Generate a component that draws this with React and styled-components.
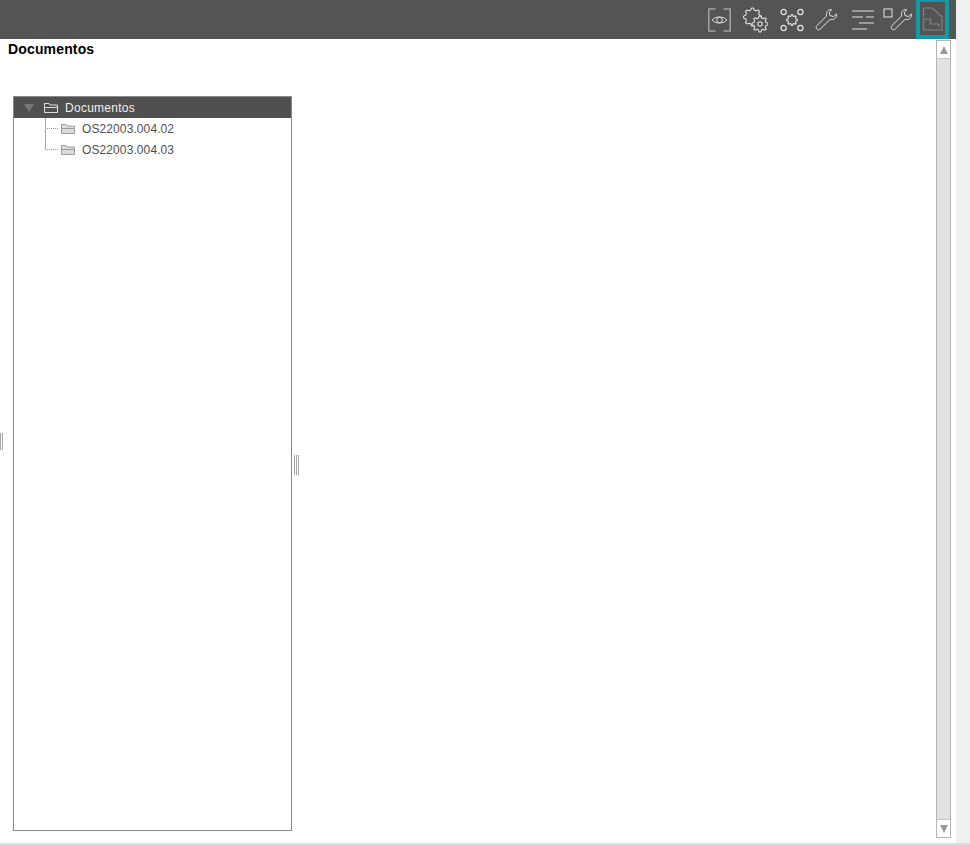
import React from 'react';
import styled, { createGlobalStyle } from 'styled-components';

const Global = createGlobalStyle`
  html, body { margin: 0; padding: 0; background: #fff; height: 100%; overflow: hidden; }
  #root { height: 100%; }
  * { box-sizing: border-box; }
`;

const Page = styled.div`
  width: 970px;
  height: 845px;
  display: flex;
  flex-direction: column;
  font-family: "Liberation Sans", Arial, sans-serif;
  background: #f0f0f0;
`;
const Frame = styled.div`
  flex: 1;
  min-height: 0;
  display: flex;
  flex-direction: column;
  width: 956px;
  background: #fff;
`;
const FootLine = styled.div`
  height: 2px;
  background: #d5dfe4;
`;
const Toolbar = styled.div`
  height: 39px;
  flex: none;
  background: #545454;
  display: flex;
  justify-content: flex-end;
  align-items: center;
  padding-right: 7px;
`;
const ToolButton = styled.button`
  flex: none;
  width: ${p => p.$w}px;
  height: 39px;
  margin-left: ${p => p.$ml || 0}px;
  padding: 0;
  background: transparent;
  border: ${p => (p.$active ? '4px solid #0e9aa7' : 'none')};
  border-top-width: ${p => (p.$active ? '2px' : '0')};
  display: flex;
  align-items: center;
  justify-content: center;
  svg { display: block; flex: none; }
`;
const Body = styled.div`
  flex: 1;
  min-height: 0;
  display: flex;
  position: relative;
`;
const Content = styled.div`
  flex: 1;
  min-width: 0;
  display: flex;
  flex-direction: column;
  padding: 2px 0 12px 8px;
`;
const Title = styled.h1`
  margin: 0;
  height: 55px;
  font-size: 14px;
  line-height: 16px;
  font-weight: 700;
  letter-spacing: 0.15px;
  color: #000;
`;
const TreePanel = styled.div`
  flex: 1;
  width: 279px;
  margin-left: 5px;
  border: 1px solid #8a8a8a;
  background: #fff;
`;
const TreeHead = styled.div`
  height: 21px;
  background: #505050;
  color: #efefef;
  display: flex;
  align-items: center;
  font-size: 12px;
  letter-spacing: 0.27px;
  padding-left: 10px;
`;
const Arrow = styled.span`
  width: 0;
  height: 0;
  border-left: 5px solid transparent;
  border-right: 5px solid transparent;
  border-top: 8px solid #767676;
  margin-right: 10px;
  margin-top: 1px;
`;
const HeadLabel = styled.span`
  margin-left: 6px;
`;
const TreeList = styled.ul`
  list-style: none;
  margin: 0;
  padding: 0 0 0 31px;
`;
const TreeRow = styled.li`
  position: relative;
  height: 21px;
  display: flex;
  align-items: center;
  font-size: 12px;
  letter-spacing: 0.1px;
  color: #505050;
  padding-left: 16px;
  &::before {
    content: "";
    position: absolute;
    left: 0;
    top: 0;
    height: ${p => (p.$last ? '11px' : '21px')};
    border-left: 1px solid #a8a8a8;
  }
  &::after {
    content: "";
    position: absolute;
    left: 2px;
    top: 10px;
    width: 11px;
    border-top: 1px dotted #9a9a9a;
  }
`;
const RowLabel = styled.span`
  margin-left: 6px;
`;
const Scrollbar = styled.div`
  flex: none;
  width: 15px;
  margin: 1px 5px 5px 0;
  display: flex;
  flex-direction: column;
  border: 1px solid #b4b4b4;
  background: #fff;
`;
const ScrollBtn = styled.div`
  flex: none;
  height: 17px;
  display: flex;
  align-items: center;
  justify-content: center;
  &::before {
    content: "";
    border-left: 4px solid transparent;
    border-right: 4px solid transparent;
    ${p => (p.$up ? 'border-bottom' : 'border-top')}: 8px solid #999;
  }
`;
const Thumb = styled.div`
  flex: 1;
  background: #e2e2e2;
  border-top: 1px solid #c4c4c4;
  border-bottom: 1px solid #c4c4c4;
`;
const Grip = styled.div`
  position: absolute;
  left: ${p => p.$x}px;
  top: ${p => p.$y}px;
  width: ${p => p.$w}px;
  height: ${p => p.$h}px;
  background: repeating-linear-gradient(90deg, #a6a6a6 0 1px, #fff 1px 2px);
`;

const Eye = () => (
  <svg width="23" height="24" viewBox="0 0 23 24" fill="none" stroke="#dcdcdc" strokeWidth="1">
    <path d="M7.5 1H0.8V23H7.5M15.5 1H22.2V23H15.5" stroke="#a4a4a4" strokeWidth="1.5" />
    <path d="M4 12C7 8 16 8 19 12C16 16 7 16 4 12Z" />
    <circle cx="11.5" cy="12" r="2.8" />
  </svg>
);

const cog = (cx, cy, ro, ri, teeth) => {
  let d = '';
  for (let i = 0; i < teeth * 4; i++) {
    const r = i % 4 < 2 ? ro : ri;
    const a = ((i - 0.5) / (teeth * 4)) * Math.PI * 2;
    d += `${i ? 'L' : 'M'}${(cx + r * Math.cos(a)).toFixed(2)} ${(cy + r * Math.sin(a)).toFixed(2)}`;
  }
  return d + 'Z';
};

const Gears = () => (
  <svg width="25" height="26" viewBox="0 0 25 26" fill="none" stroke="#e2e2e2" strokeWidth="1.1" strokeLinejoin="round">
    <path d={cog(9.5, 10, 9, 7, 8)} />
    <path d={cog(17, 17, 8, 6, 8)} fill="#545454" />
    <circle cx="17" cy="17" r="2.2" />
  </svg>
);

const Nodes = () => (
  <svg width="24" height="24" viewBox="0 0 24 24" fill="none" stroke="#e6e6e6" strokeWidth="1.2">
    <path d={cog(12, 12, 5.4, 4, 8)} strokeWidth="1.1" strokeLinejoin="round" />
    <circle cx="3.6" cy="4" r="2.6" />
    <circle cx="20.4" cy="4" r="2.6" />
    <circle cx="3.6" cy="20" r="2.6" />
    <circle cx="20.4" cy="20" r="2.6" />
  </svg>
);

const wrenchPath = 'M16.5 1.5C13.5 1.2 11.2 3.6 11.5 6.8C11.6 7.6 11.4 8.2 10.8 8.8L1.9 17.6C0.9 18.6 0.9 20 1.9 21C2.9 22 4.3 22 5.3 21L14.2 12.2C14.8 11.6 15.4 11.4 16.2 11.5C19.4 11.9 22 9.4 21.6 6L18.4 8.6L15 7.5L14.4 4.6L16.5 1.5Z';

const Wrench = () => (
  <svg width="23" height="23" viewBox="0 0 23 23" fill="none" stroke="#e6e6e6" strokeWidth="1" strokeLinejoin="round">
    <path d={wrenchPath} />
  </svg>
);

const Lines = () => (
  <svg width="24" height="22" viewBox="0 0 24 22" fill="none" stroke="#b4b4b4" strokeWidth="1.4">
    <path d="M1 2H23M1 8H12M15 8H23M8 14H23M1 20H16" />
  </svg>
);

const SquareWrench = () => (
  <svg width="30" height="25" viewBox="0 0 30 25" fill="none">
    <rect x="1" y="2" width="8" height="8" stroke="#c4c4c4" strokeWidth="1.3" />
    <g transform="translate(7 1)" stroke="#e6e6e6" strokeWidth="1" strokeLinejoin="round">
      <path d={wrenchPath} />
    </g>
  </svg>
);

const Doc = () => (
  <svg width="22" height="24" viewBox="0 0 22 24" fill="none" stroke="#828282" strokeWidth="1.2">
    <path d="M1.5 10V1H10.5L20 10V23H1.5V12H8.5V17H17V20" />
  </svg>
);

const Folder = ({ color, fill }) => (
  <svg width="15" height="10" viewBox="0 0 15 10" fill={fill} stroke={color} strokeWidth="1">
    <path d="M0.5 9.5V0.5H5L6 2H13.5V9.5Z" />
    <path d="M0.5 4.5H14" />
  </svg>
);

export default function App() {
  return (
    <Page>
      <Global />
      <Frame>
        <Toolbar>
          <ToolButton $w={23}><Eye /></ToolButton>
          <ToolButton $w={25} $ml={12}><Gears /></ToolButton>
          <ToolButton $w={24} $ml={12}><Nodes /></ToolButton>
          <ToolButton $w={23} $ml={11}><Wrench /></ToolButton>
          <ToolButton $w={24} $ml={13}><Lines /></ToolButton>
          <ToolButton $w={30} $ml={8}><SquareWrench /></ToolButton>
          <ToolButton $w={33} $ml={3} $active><Doc /></ToolButton>
        </Toolbar>
        <Body>
          <Content>
            <Title>Documentos</Title>
            <TreePanel>
              <TreeHead>
                <Arrow />
                <Folder color="#dedede" fill="none" />
                <HeadLabel>Documentos</HeadLabel>
              </TreeHead>
              <TreeList>
                <TreeRow>
                  <Folder color="#9c9c9c" fill="#dcdcdc" />
                  <RowLabel>OS22003.004.02</RowLabel>
                </TreeRow>
                <TreeRow $last>
                  <Folder color="#9c9c9c" fill="#dcdcdc" />
                  <RowLabel>OS22003.004.03</RowLabel>
                </TreeRow>
              </TreeList>
            </TreePanel>
          </Content>
          <Scrollbar>
            <ScrollBtn $up />
            <Thumb />
            <ScrollBtn />
          </Scrollbar>
          <Grip $x={0} $y={394} $w={4} $h={17} />
          <Grip $x={294} $y={416} $w={5} $h={20} />
        </Body>
      </Frame>
      <FootLine />
    </Page>
  );
}
